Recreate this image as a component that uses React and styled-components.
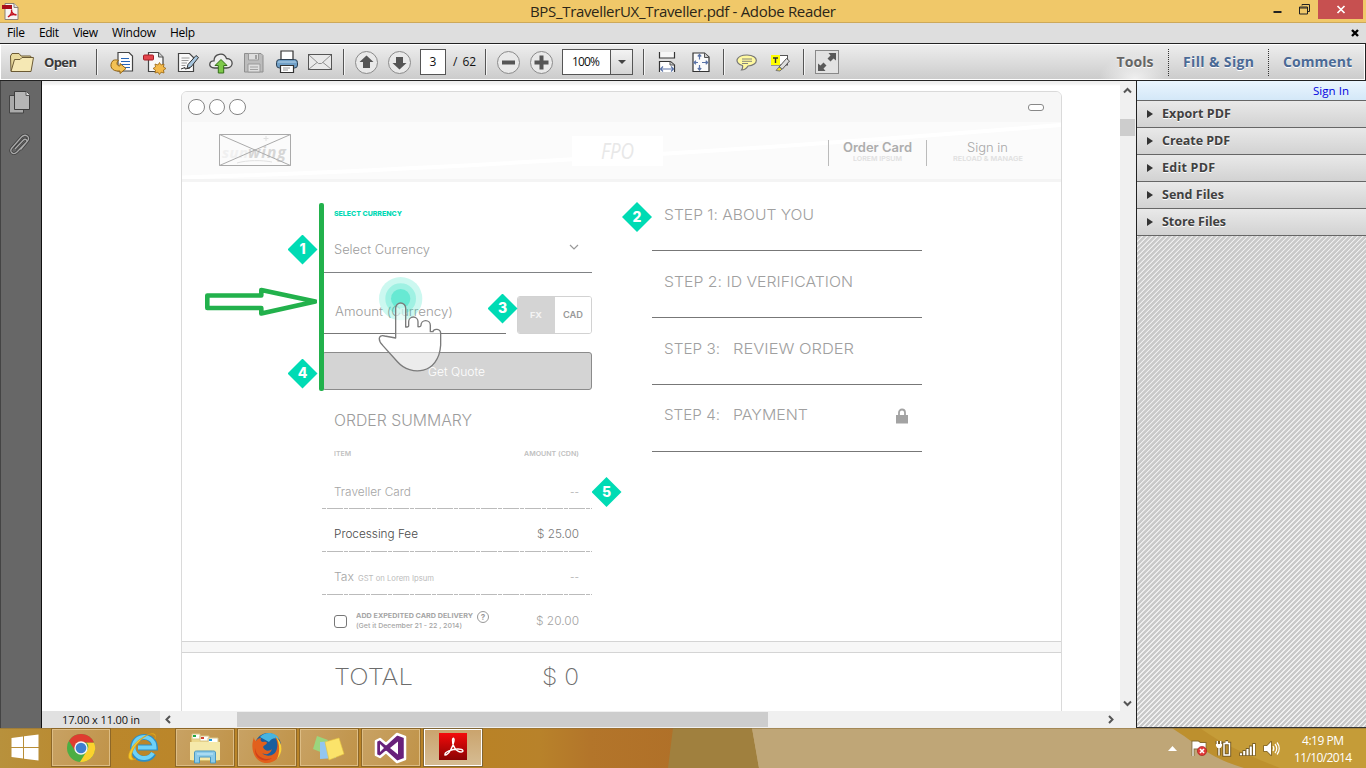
import React, { useLayoutEffect, useRef, useState } from "react";
import styled, { createGlobalStyle, css } from "styled-components";

const UI = '"Open Sans", "Noto Sans", sans-serif';
const DOC = 'Inter, "Open Sans", sans-serif';

const Global = createGlobalStyle`
  * { box-sizing: border-box; }
  html, body { margin: 0; padding: 0; overflow: hidden; }
  body { font-family: ${UI}; background: #fff; }
  svg { display: block; flex: none; }
`;

/* ---------- text ---------- */
const TextSpan = styled.span`
  display: inline-block;
  flex: none;
  white-space: pre;
  transform-origin: 0 50%;
  font-variant-ligatures: none;
  font-feature-settings: "calt" 0;
  font-family: ${(p) => (p.$doc ? DOC : UI)};
  font-size: ${(p) => p.$size}px;
  line-height: ${(p) => p.$line || 16}px;
  font-weight: ${(p) => p.$weight || 400};
  font-style: ${(p) => (p.$italic ? "italic" : "normal")};
  color: ${(p) => p.$color || "#111"};
  text-shadow: ${(p) => (p.$embossed ? "0 1px 0 #fff" : "none")};
`;

/* Makes a line exactly `width` pixels long: interface text is tracked,
   document text (and anything with `stretch`) gets wider or narrower letters. */
function Text({ width, stretch, children, ...rest }) {
  const ref = useRef(null);
  const [fit, setFit] = useState(null);
  const scaled = stretch || rest.$doc;
  useLayoutEffect(() => {
    if (!width) return;
    const natural = ref.current.getBoundingClientRect().width;
    const gaps = Math.max(1, String(children).length - 1);
    setFit(
      scaled
        ? { transform: `scaleX(${width / natural})`, marginRight: `${width - natural}px` }
        : { width, letterSpacing: `${(width - natural) / gaps}px` }
    );
  }, []);
  return (
    <TextSpan ref={ref} style={fit || undefined} {...rest}>
      {children}
    </TextSpan>
  );
}

/* ---------- window frame ---------- */
const Screen = styled.div`
  width: 1366px;
  height: 768px;
  display: flex;
  flex-direction: column;
  overflow: hidden;
`;

const TitleBar = styled.header`
  height: 23px;
  flex: none;
  display: grid;
  grid-template-columns: 1fr auto 1fr;
  background: #f0c869;
  border-bottom: 1px solid #cda95a;
`;

const TitleIcon = styled.div`
  padding: 3px 0 0 2px;
`;

const WindowButtons = styled.div`
  display: flex;
  justify-content: flex-end;
  padding-right: 3px;
`;

const WindowButton = styled.div`
  width: ${(p) => p.$w}px;
  height: 19px;
  display: flex;
  align-items: center;
  justify-content: center;
  background: ${(p) => (p.$close ? "#c75050" : "transparent")};
`;

const MenuBar = styled.nav`
  height: 20px;
  flex: none;
  display: flex;
  align-items: center;
  gap: 14px;
  padding: 0 7px;
  background: #dedede;
`;

const MenuClose = styled.div`
  margin-left: auto;
`;

const Toolbar = styled.div`
  height: 38px;
  flex: none;
  display: flex;
  align-items: center;
  border: 1px solid #222;
  border-left: 0;
  box-shadow: inset 0 0 0 1px #fff;
  background: linear-gradient(#eeeeee, #cbcbcb);
`;

const Slot = styled.div`
  width: ${(p) => p.$w || 33}px;
  flex: none;
  display: flex;
  justify-content: center;
`;

const Separator = styled.div`
  width: 1px;
  height: 26px;
  flex: none;
  margin: 0 ${(p) => p.$after}px 0 ${(p) => p.$before}px;
  background: #555;
  box-shadow: 1px 0 0 #f4f4f4;
`;

const Gap = styled.div`
  width: ${(p) => p.$w}px;
  flex: none;
`;

const PageInput = styled.div`
  width: 26px;
  height: 26px;
  margin: 0 7px 0 4px;
  flex: none;
  display: flex;
  align-items: center;
  justify-content: center;
  background: #fff;
  border: 1px solid #555;
`;

const ZoomSelect = styled.div`
  width: 71px;
  height: 26px;
  margin-left: 4px;
  flex: none;
  display: flex;
  align-items: center;
  background: #fff;
  border: 1px solid #555;
`;

const ZoomValue = styled.div`
  width: 46px;
  display: flex;
  justify-content: center;
`;

const ZoomArrow = styled.div`
  width: 22px;
  height: 24px;
  margin-left: auto;
  display: flex;
  align-items: center;
  justify-content: center;
  border-left: 1px solid #555;
  background: linear-gradient(#f3f3f3, #d5d5d5);
`;

const PanelTabs = styled.div`
  height: 34px;
  margin-left: auto;
  padding-right: 13px;
  display: flex;
  align-items: center;
`;

const TabGlow = styled.div`
  width: 80px;
  height: 34px;
  display: flex;
  align-items: center;
  justify-content: center;
  background: radial-gradient(ellipse 36px 25px at 50% 100%, #f0f0f0, transparent);
`;

const DottedRule = styled.div`
  height: 27px;
  border-left: 1px dotted #333;
  margin: 0 14px 0 ${(p) => (p.$tight ? -7 : 14)}px;
`;

/* ---------- workspace ---------- */
const Workspace = styled.div`
  height: 647px;
  flex: none;
  display: flex;
`;

const Rail = styled.aside`
  width: 42px;
  flex: none;
  display: flex;
  flex-direction: column;
  align-items: center;
  gap: 18px;
  padding: 9px 4px 0 0;
  background: #676767;
  border-left: 1px solid #444;
  border-right: 1px solid #111;
`;

const Viewer = styled.div`
  width: 1094px;
  flex: none;
  display: flex;
  flex-direction: column;
`;

const ViewerTop = styled.div`
  height: 630px;
  display: flex;
`;

const Canvas = styled.div`
  width: 1078px;
  height: 630px;
  position: relative;
  overflow: hidden;
  background: linear-gradient(#ececec, #f2f2f2 3px, #fff 5px);
  padding: 10px 0 0 139px;
`;

const VScroll = styled.div`
  width: 16px;
  padding-right: 1px;
  display: flex;
  flex-direction: column;
  align-items: center;
  background: #f0f0f0;
`;

const VThumb = styled.div`
  width: 15px;
  height: 17px;
  margin-top: 25px;
  background: #cdcdcd;
`;

const VArrow = styled.div`
  margin-top: ${(p) => p.$top};
  padding-bottom: ${(p) => p.$bottom || 0}px;
`;

const BottomBar = styled.div`
  height: 17px;
  display: flex;
  align-items: center;
  background: #f0f0f0;
`;

const PageSize = styled.div`
  width: 118px;
  height: 17px;
  padding-left: 20px;
  display: flex;
  align-items: center;
  background: #e1e1e1;
`;

const HThumb = styled.div`
  width: 531px;
  height: 15px;
  margin: 0 340px 0 66px;
  background: #cdcdcd;
`;

const SidePanel = styled.aside`
  width: 230px;
  flex: none;
  display: flex;
  flex-direction: column;
  border-left: 1px solid #222;
  border-bottom: 1px solid #333;
  background: repeating-linear-gradient(135deg, #f0f0f0 0 0.9px, #c9c9c9 1.2px 3.2px, #f0f0f0 3.54px);
`;

const SignIn = styled.div`
  height: 19px;
  padding-right: 17px;
  display: flex;
  justify-content: flex-end;
  align-items: center;
  background: linear-gradient(#eaf5fe, #d4e8f8);
`;

const PanelRow = styled.div`
  height: 27px;
  padding-left: 10px;
  display: flex;
  align-items: center;
  gap: 9px;
  border-top: 1px solid #666;
  background: linear-gradient(#e9e9e9, #d2d2d2);
  ${(p) => p.$last && css`height: 28px; border-bottom: 1px solid #666;`}
`;

/* ---------- document ---------- */
const Page = styled.div`
  width: 881px;
  height: 640px;
  display: flex;
  flex-direction: column;
  border: 1px solid #dadada;
  border-radius: 6px 6px 0 0;
  overflow: hidden;
  background: #fff;
`;

const Chrome = styled.div`
  height: 30px;
  flex: none;
  padding: 0 17px 0 6px;
  display: flex;
  align-items: center;
  gap: 4px;
  background: #f7f7f7;
`;

const Dot = styled.div`
  width: 16.5px;
  height: 16.5px;
  border: 1px solid #858585;
  border-radius: 50%;
  background: #fff;
`;

const Pill = styled.div`
  width: 16px;
  height: 7px;
  margin-left: auto;
  border: 1px solid #888;
  border-radius: 3px;
  background: #fff;
`;

const SiteHeader = styled.div`
  height: 60px;
  flex: none;
  position: relative;
  display: flex;
  align-items: flex-start;
  padding: 12px 0 0 37px;
  background: #fbfbfb;
  border-bottom: 3px solid #f4f4f4;
`;

const Sweep = styled.svg`
  position: absolute;
  left: 0;
  top: 0;
`;

const Logo = styled.div`
  width: 72px;
  height: 32px;
  position: relative;
  display: flex;
  align-items: center;
  padding: 3px 0 0 3px;
`;

const Cross = styled.svg`
  position: absolute;
  left: 0;
  top: 0;
`;

const Placeholder = styled.div`
  width: 91px;
  height: 30px;
  margin: 2px 165px 0 281px;
  position: relative;
  display: flex;
  align-items: center;
  justify-content: center;
  background: #fff;
`;

const SiteLink = styled.div`
  width: ${(p) => p.$w}px;
  height: 26px;
  margin-top: 6px;
  position: relative;
  display: flex;
  flex-direction: column;
  align-items: center;
  border-left: 1px solid #bbb;
`;

const Body = styled.div`
  height: 459px;
  flex: none;
  padding-left: 140px;
  display: grid;
  grid-template-columns: 270px 270px;
  gap: 60px;
`;

const Form = styled.div`
  display: flex;
  flex-direction: column;
`;

const FieldLabel = styled.div`
  height: 36px;
  padding: 27px 0 0 12px;
  line-height: 0;
`;

const Select = styled.div`
  height: 55px;
  padding: 23px 13px 0 12px;
  display: flex;
  justify-content: space-between;
  border-bottom: 1px solid #808285;
`;

const Chevron = styled.div`
  padding-top: 2px;
`;

const AmountRow = styled.div`
  height: 61px;
  display: flex;
  align-items: flex-end;
  justify-content: space-between;
`;

const AmountField = styled.div`
  width: 184px;
  height: 61px;
  padding: 31px 0 0 13px;
  display: flex;
  align-items: flex-start;
  border-bottom: 1px solid #777;
`;

const Toggle = styled.div`
  width: 75px;
  height: 38px;
  display: flex;
  border: 1px solid #d2d2d2;
  border-radius: 3px;
  overflow: hidden;
`;

const ToggleOption = styled.div`
  flex: 1;
  display: flex;
  align-items: center;
  justify-content: center;
  background: ${(p) => (p.$on ? "#d4d4d4" : "#fff")};
`;

const QuoteButton = styled.div`
  height: 38px;
  margin-top: 18px;
  padding: 1px 1px 0 0;
  display: flex;
  align-items: center;
  justify-content: center;
  border: 1px solid #8b8b8b;
  border-radius: 3px;
  background: #d4d4d4;
`;

const SummaryTitle = styled.div`
  height: 38px;
  margin-top: 20px;
  padding: 1px 0 0 12px;
  display: flex;
  align-items: flex-start;
`;

const TableHead = styled.div`
  height: 10px;
  padding: 1px 13px 0 12px;
  display: flex;
  justify-content: space-between;
`;

const TableRow = styled.div`
  height: ${(p) => p.$h}px;
  padding: ${(p) => p.$top}px 13px 0 12px;
  display: flex;
  justify-content: space-between;
  background: repeating-linear-gradient(90deg, #bbb 0 4px, #fff 4px 5px, #bbb 5px 21px, #fff 21px 22px) 0 100% / 100% 1px no-repeat;
`;

const Inline = styled.div`
  display: flex;
  gap: 4px;
`;

const DeliveryRow = styled.div`
  height: 46px;
  padding: 15px 13px 0 12px;
  display: flex;
`;

const Checkbox = styled.div`
  width: 13px;
  height: 13px;
  margin: 5px 9px 0 0;
  border: 1px solid #777;
  border-radius: 3px;
`;

const DeliveryText = styled.div`
  width: 117px;
  padding-top: 1px;
  display: flex;
  flex-direction: column;
  align-items: flex-start;
`;

const HelpMark = styled.div`
  width: 12px;
  height: 12px;
  margin: 1px 0 0 4px;
  display: flex;
  align-items: center;
  justify-content: center;
  border: 1px solid #999;
  border-radius: 50%;
`;

const DeliveryPrice = styled.div`
  height: 16px;
  margin: 3px 0 0 auto;
  display: flex;
`;

const Steps = styled.div`
  display: flex;
  flex-direction: column;
`;

const Step = styled.div`
  height: ${(p) => p.$h}px;
  padding: ${(p) => p.$top}px 14px 0 12px;
  display: flex;
  gap: 13px;
  border-bottom: 1px solid #777;
`;

const Lock = styled.div`
  margin: 3px 0 0 auto;
`;

const Band = styled.div`
  height: 12px;
  flex: none;
  background: #f7f7f7;
  border-top: 1px solid #d4d4d4;
  border-bottom: 1px solid #d4d4d4;
`;

const TotalRow = styled.div`
  width: 270px;
  margin-left: 140px;
  padding: 9px 13px 0 12px;
  display: flex;
  justify-content: space-between;
`;

/* ---------- annotations laid over the page ---------- */
const Marker = styled.div`
  position: absolute;
  left: ${(p) => p.$x - 15}px;
  top: ${(p) => p.$y - 15}px;
  width: 30px;
  height: 30px;
  display: flex;
  align-items: center;
  justify-content: center;
  padding-bottom: 1px;
  background: #00dbb4;
  clip-path: polygon(50% 0, 100% 50%, 50% 100%, 0 50%);
`;

const GreenBar = styled.div`
  position: absolute;
  left: 277px;
  top: 122px;
  width: 5px;
  height: 188px;
  border-radius: 2px;
  background: #22b14c;
`;

const Arrow = styled.svg`
  position: absolute;
  left: 161px;
  top: 205px;
`;

const Hand = styled.svg`
  position: absolute;
  left: 334.67px;
  top: 194px;
`;

/* ---------- taskbar ---------- */
const Taskbar = styled.footer`
  height: 40px;
  flex: none;
  position: relative;
  display: flex;
  align-items: flex-start;
  background: linear-gradient(90deg, #b8913c 0, #bb872b 100px, #b98226 480px, #b8822a 540px, #b3752a 590px, #b07028 680px, #c3aa78 760px, #bea577 1366px);
`;

const Wallpaper = styled.svg`
  position: absolute;
  left: 0;
  top: 0;
`;

const StartButton = styled.div`
  width: 51px;
  height: 40px;
  padding: 6px 0 0 11px;
  position: relative;
`;

const AppButton = styled.div`
  width: 60px;
  height: 39px;
  margin-right: 2px;
  position: relative;
  display: flex;
  align-items: center;
  justify-content: center;
  ${(p) =>
    !p.$plain &&
    css`
      border: 1px solid ${p.$active ? "#806535" : "#8d6728"};
      box-shadow: inset 0 0 0 1px ${p.$active ? "#fff" : "#ddbd85"};
      background: ${p.$active ? "linear-gradient(#caa36c, #d6bd94)" : "linear-gradient(110deg, #c8a264, #c09348)"};
    `}
`;

const Tray = styled.div`
  margin-left: auto;
  height: 40px;
  position: relative;
  display: flex;
  align-items: center;
`;

const TrayIcons = styled.div`
  display: flex;
  align-items: center;
  gap: 7px;
  padding: 1px 14px 0 0;
`;

const Clock = styled.div`
  width: 58px;
  margin: 1px 14px 0 0;
  display: flex;
  flex-direction: column;
  align-items: center;
`;

/* ---------- toolbar icons ---------- */
const PdfFile = () => (
  <svg width="17" height="17" viewBox="0 0 17 17">
    <path d="M3 .5h9l4 4v12H3z" fill="#f7f5f3" stroke="#8b8174" />
    <path d="M12 .5v4h4" fill="#ddd" stroke="#8b8174" />
    <path d="M0 2h10v4H0z" fill="#a90f1c" />
    <path d="M6 14c3-2 4-5 3.500-7.500M9.500 7c0 3 2 4.500 5 4.700M6 14c2-2 5-3 8.500-2" fill="none" stroke="#c41522" strokeWidth="1.400" />
  </svg>
);
const Folder = () => (
  <svg width="26" height="22" viewBox="0 0 26 22">
    <path d="M2 20 1.500 5 3 2.500h7l2 2.500h9.500l1 2" fill="#e8d99c" stroke="#6b5a34" />
    <path d="M2 20.500 5.500 8.500 11 8.500 13 6.500h11.500L22 20.500z" fill="#f5e8b4" stroke="#6b5a34" strokeLinejoin="round" />
  </svg>
);
const ConvertIcon = () => (
  <svg width="26" height="25" viewBox="0 0 26 25">
    <path d="M9 2.500h11l3.500 3.500V21H9z" fill="#fcfcfc" stroke="#444" strokeWidth="1.200" />
    <path d="M12 8.500h8M12 11.500h9M12 14.500h9M15 17.500h6" stroke="#2766b8" strokeWidth="1.200" />
    <path d="M4 10.500c1.500-.8 4-.8 5.500 0-2 1-2.500 5.500 1.500 5.500v-2.500l6 5-6 5v-2.500c-8.500 1-11.500-5.500-7-10.500z" fill="#f4c255" stroke="#946412" />
  </svg>
);
const CreateIcon = () => (
  <svg width="26" height="25" viewBox="0 0 26 25">
    <path d="M6.500 2.500h10l4.500 4.500V21.500H6.500z" fill="#f8f8f8" stroke="#444" strokeWidth="1.200" />
    <path d="M16.500 2.500V7H21" fill="#ccc" stroke="#555" />
    <rect x="1.500" y="5" width="10" height="5" rx="1" fill="#e3444b" stroke="#a31c25" />
    <path d="m17.500 12.500 1.500 2.500 3-1-.5 3 2.500 1.500-2.500 1.500.5 3-3-.8-1.500 2.300-1.500-2.300-3 .8.500-3-2.500-1.500 2.500-1.500-.5-3 3 1z" fill="#f3b94a" stroke="#9b6815" strokeWidth=".8" />
  </svg>
);
const EditIcon = () => (
  <svg width="26" height="25" viewBox="0 0 26 25">
    <path d="M3.500 3.500h11l4 4V21.500h-15z" fill="#f9f9f9" stroke="#444" strokeWidth="1.200" />
    <path d="M6.500 8h8M6.500 10.500h7M6.500 13h5.500M6.500 15.500h4" stroke="#999" />
    <path d="m13 14.500 8-9 2.500 2-7.500 9.500-4 1.500z" fill="#a8c7e0" stroke="#333" />
    <path d="m6 19 4-1.500v1.500l5-1" fill="none" stroke="#333" />
  </svg>
);
const CloudIcon = () => (
  <svg width="26" height="25" viewBox="0 0 26 25">
    <path d="M6.500 18C-.5 18 1 10.500 6 10.800 6 3.500 16 1.500 18.500 8.500c7.500 0 7.500 9.500 0 9.500z" fill="#eee" stroke="#4c4c4c" strokeWidth="1.300" />
    <path d="m13 9.500 6 6h-3.300v7.500h-5.400v-7.500H7z" fill="#7ec94a" stroke="#346e18" />
  </svg>
);
const SaveIcon = () => (
  <svg width="26" height="25" viewBox="0 0 26 25">
    <path d="M3.500 3.500h16.500l2 2v16.500H3.500z" fill="#bcbcbc" stroke="#8e8e8e" />
    <path d="M7.500 3.500h10v6.500h-10zM7 14h12v8H7z" fill="#dedede" stroke="#999" />
    <path d="M14 5h2v4h-2zM9 16.500h8v1H9zm0 2.500h8v1H9z" fill="#a0a0a0" />
  </svg>
);
const PrintIcon = () => (
  <svg width="26" height="26" viewBox="0 0 26 26">
    <path d="M7 2h12v10H7z" fill="#fff" stroke="#333" strokeWidth="1.200" />
    <rect x="2.500" y="10.500" width="21" height="8.500" rx="3" fill="#6f9fc7" stroke="#2f4254" />
    <path d="M4 13h18" stroke="#b8d5eb" />
    <path d="M6.500 16.500h13v7h-13z" fill="#fff" stroke="#333" strokeWidth="1.200" />
    <path d="M9 19h7M9 21h5" stroke="#999" />
  </svg>
);
const MailIcon = () => (
  <svg width="26" height="20" viewBox="0 0 26 20">
    <rect x="1.500" y="2.500" width="23" height="15" fill="#e9e9e9" stroke="#555" />
    <path d="m2 3 9.500 8.500h3L24 3M2 17l8-6.500M24 17l-8-6.500" fill="none" stroke="#909090" />
  </svg>
);
const RoundButton = ({ d }) => (
  <svg width="25" height="25" viewBox="0 0 25 25">
    <circle cx="12.500" cy="12.500" r="11" fill="#e9e9e9" stroke="#8a8a8a" />
    <path d={d} fill="#555" />
  </svg>
);
const FitWidthIcon = () => (
  <svg width="20" height="22" viewBox="0 0 20 22">
    <path d="M2.500 1v6h15V1" fill="#f6f6f6" stroke="#333" strokeWidth="1.200" />
    <path d="M2.500 21V10.500h11l4 3.500v7" fill="#fff" stroke="#333" strokeWidth="1.200" />
    <path d="M13 10.500V14h4" fill="#ccc" stroke="#555" />
    <path d="M3.500 18h13M6 15.500 3.500 18 6 20.500M14 15.500l2.500 2.500-2.500 2.500" fill="none" stroke="#5a73a8" strokeWidth="1.200" />
  </svg>
);
const FitPageIcon = () => (
  <svg width="20" height="22" viewBox="0 0 20 22">
    <path d="M2 2h11.500L18 6v14.500H2z" fill="#fbfbfb" stroke="#333" strokeWidth="1.200" />
    <path d="M13.500 2v4.500H18" fill="#ccc" stroke="#555" />
    <path d="M8.500 3.500v5M8.500 14v5M3 11.500h4M11 11.500h5.500M6.800 5.500l1.700-2 1.700 2M6.800 17l1.700 2 1.700-2M5 9.700l-2 1.800 2 1.800M14.700 9.700l2 1.800-2 1.800" fill="none" stroke="#5a73a8" strokeWidth="1.200" />
  </svg>
);
const CommentIcon = () => (
  <svg width="22" height="20" viewBox="0 0 22 20">
    <path d="M11 3c12.500 0 12 10.500 1 11-1.500 2.500-4 4-6.500 4 1-1.500 1.500-3 1-4.500C-2.500 11 0 3 11 3z" fill="#fff9a0" stroke="#777" strokeWidth="1.200" />
    <path d="M6 7h10M6 9.300h10M6 11.500h6" stroke="#777" strokeWidth=".9" />
  </svg>
);
const MarkIcon = () => (
  <svg width="22" height="20" viewBox="0 0 22 20">
    <rect x="2.500" y="3.500" width="16" height="9.500" fill="#fff" stroke="#555" />
    <path d="M2 3h9v10H2z" fill="#ff0" />
    <path d="M4 6h5M6.500 6v5" stroke="#333" strokeWidth="1.400" />
    <path d="m10 15 7.500-8.500L20.500 9l-7 8z" fill="#ddd" stroke="#555" />
    <path d="m7 18.500 3-3.500 3 2-2 2z" fill="#f6e31a" stroke="#777" />
  </svg>
);
const FullScreenIcon = () => (
  <svg width="24" height="24" viewBox="0 0 24 24">
    <rect x=".5" y=".5" width="23" height="23" fill="#e2e2e2" stroke="#888" />
    <path d="M13.500 3H21v7.500l-2.500-2-3 3-3-3 3-3zM3 13.500l2.500 2 3-3 3 3-3 3 2 2.500H3z" fill="#5a5a5a" />
  </svg>
);
const PagesIcon = () => (
  <svg width="23" height="25" viewBox="0 0 23 25">
    <path d="M1.500 5.500h14v17.500h-14z" fill="#aaa" stroke="#444" />
    <path d="M6.500 1.500h12l3 3v15h-15z" fill="#b5b5b5" stroke="#3d3d3d" />
    <path d="M18 1.500v4h4" fill="#ddd" stroke="#555" />
  </svg>
);
const ClipIcon = () => (
  <svg width="24" height="24" viewBox="0 0 24 24" fill="none">
    <path d="m8 16 8.500-9c2-2 4.500.5 3 2.300L10 19c-3.500 3.500-8 0-5.500-3.500l10-11.500c4-4 9 0 6 4.200l-7 8.300" stroke="#3f3f3f" strokeWidth="3" />
    <path d="m8 16 8.500-9c2-2 4.500.5 3 2.300L10 19c-3.500 3.500-8 0-5.500-3.500l10-11.500c4-4 9 0 6 4.200l-7 8.300" stroke="#aaa" strokeWidth="1.300" />
  </svg>
);
const Caret = ({ d, w, h, stroke = "#555", sw = 2 }) => (
  <svg width={w} height={h} viewBox={`0 0 ${w} ${h}`} fill="none">
    <path d={d} stroke={stroke} strokeWidth={sw} />
  </svg>
);

/* ---------- taskbar icons ---------- */
const WindowsLogo = () => (
  <svg width="28" height="27" viewBox="0 0 28 27" fill="#fff">
    <path d="M.5 4 12 2.500V13H.5zM13 2.300 27.500.5V13H13zM.5 14H12v10.500L.5 23zM13 14h14.500v12.500L13 24.700z" />
  </svg>
);
const ChromeLogo = () => (
  <svg width="30" height="30" viewBox="0 0 30 30">
    <circle cx="15" cy="15" r="14" fill="#4cae43" />
    <path d="M28 9.500A14 14 0 0 1 14 29l6.500-10.500a6.500 6.500 0 0 0 0-9z" fill="#fbd22d" />
    <path d="M3 8 9.500 18.500A6.500 6.500 0 0 1 15 9.500h13A14 14 0 0 0 3 8z" fill="#df3c30" />
    <circle cx="15" cy="15" r="6.700" fill="#f5f5f5" />
    <circle cx="15" cy="15" r="5.300" fill="#3f7fcf" />
  </svg>
);
const ExplorerLogo = () => (
  <svg width="32" height="32" viewBox="0 0 32 32" fill="none">
    <path d="M26.500 21.500A11 11 0 1 1 28 15.500H11" stroke="#2c8fc7" strokeWidth="5.800" />
    <path d="M26 21A10.500 10.500 0 1 1 27.500 15.500H11" stroke="#6ed2f7" strokeWidth="4" />
    <path d="M5 28C-3 28 4 12 15 6 22 1 30 0 28 7c3-10-9-5-16 3C4 18 2 28 9 27z" fill="#f6ca29" stroke="#d69a17" strokeWidth=".6" />
  </svg>
);
const FilesLogo = () => (
  <svg width="33" height="32" viewBox="0 0 33 32">
    <path d="M2 4h9l1 3h7l1 2h10v20H2z" fill="#ecd88b" stroke="#c3a04a" />
    <path d="M3 2h8v5H3zM11 4h9v5h-9zM19 6h10v5H19z" fill="#fff" stroke="#d9c68a" />
    <path d="M4 3h3v2H4z" fill="#1ca642" />
    <path d="M12 5h3v2h-3z" fill="#d3442f" />
    <path d="M20 7h3v2h-3z" fill="#1b9be0" />
    <path d="M1 10h30v18H1z" fill="#f5e9aa" />
    <path d="M5.500 31V21c0-2 1-2 2-2h16c2 0 3 0 3 2v10h-5v-6h-11v6z" fill="#8ccbe9" stroke="#4d98bf" />
    <path d="M8 22h16" stroke="#c7eafa" />
  </svg>
);
const FirefoxLogo = () => (
  <svg width="32" height="32" viewBox="0 0 32 32">
    <circle cx="17" cy="14" r="13" fill="#1b5e9d" />
    <path d="M9 5C14-1 25 0 28 7c-5-2-8 0-10 3z" fill="#46b4e0" />
    <path d="M3 5c0 3 1 3 2 4 2-3 4-3 5-3-1 2 0 4 2 4 2-.5 4 0 4 1-1 2-3 2-4 4 2 5 7 4 9 2-2 6-7 6-10 4 5 5 14 3 15-5 1-4 0-8-2-11 4 2 7 8 6 13-1 8-7 13-14 13C5 31-2 19 3 5z" fill="#e2601c" />
    <path d="M25 5c6 5 8 15 1 22 3-7 3-15-1-22z" fill="#f8d33b" />
    <path d="M4 16c1 8 8 13 17 10-5 5-18 3-17-10z" fill="#d13f1a" />
  </svg>
);
const NotesLogo = () => (
  <svg width="34" height="28" viewBox="0 0 34 28">
    <path d="m5 2 11 4-5 13-10-4z" fill="#9bd57d" />
    <path d="m8 8 15-1 1 17-16 1z" fill="#93c6ef" />
    <path d="m13 8 14-4 5 16-15 6z" fill="#fbe36a" stroke="#e5c33e" strokeWidth=".6" />
  </svg>
);
const StudioLogo = () => (
  <svg width="34" height="32" viewBox="0 0 34 32">
    <path d="M2 9 6 7l6 5L23 2l8 3v22l-8 3-11-10-6 5-4-2z" fill="#68217a" stroke="#fff" strokeWidth="2.500" strokeLinejoin="round" />
    <path d="m6 12 4 4-4 4zM16 16l8-6.500v13z" fill="#fff" />
  </svg>
);
const AcrobatLogo = () => (
  <svg width="28" height="29" viewBox="0 0 28 29">
    <defs>
      <linearGradient id="acro" x1="0" y1="0" x2="0" y2="1">
        <stop offset="0" stopColor="#f40b0b" />
        <stop offset="1" stopColor="#8a0303" />
      </linearGradient>
    </defs>
    <path d="M0 0h28v27H0z" fill="url(#acro)" />
    <path d="M6 22c-1-3 7-6 13-6 6 0 6 3 3 3-5 0-9-7-8.500-12 .5-3 2-2 1.500 1-.8 5-5 14-9 14z" fill="none" stroke="#fff" strokeWidth="1.400" />
  </svg>
);
const FlagIcon = () => (
  <svg width="17" height="17" viewBox="0 0 17 17">
    <path d="M2 16V1.500M2 2h5l2 1.500h5V9H9L7 8H2z" fill="#fff" stroke="#6d5a30" strokeWidth="3" opacity=".7" />
    <path d="M2 16V1.500M2 2h5l2 1.500h5V9H9L7 8H2z" fill="#fff" stroke="#fff" strokeWidth="1.200" />
    <circle cx="11" cy="11" r="4.600" fill="#e13838" stroke="#a01818" strokeWidth=".6" />
    <path d="m9 9 4 4m0-4-4 4" stroke="#fff" strokeWidth="1.600" />
  </svg>
);
const BatteryIcon = () => (
  <svg width="17" height="17" viewBox="0 0 17 17" fill="none">
    <path d="M9 3.500h5.500v11.500H9zM10.500 1.800h2.500M4 5v10.500M2.300 1v3M5.700 1v3" stroke="#5d4a22" strokeWidth="3.400" opacity=".75" />
    <path d="M9 3.500h5.500v11.500H9zM10.500 2h2.500M4 6v9.500M2.300 1v3M5.700 1v3" stroke="#fff" strokeWidth="1.400" />
    <path d="M1 4h6v2L5.500 8h-3L1 6z" fill="#fff" />
  </svg>
);
const SignalIcon = () => (
  <svg width="17" height="14" viewBox="0 0 17 14">
    <path d="M2 14v-3.500M5.200 14V8M8.500 14V6M11.800 14V3.500M15 14V1" stroke="#5d4a22" strokeWidth="3.400" opacity=".75" />
    <path d="M2 13.200v-2M5.200 13.200V9M8.500 13.200V7M11.800 13.200V4.500M15 13.200V2" stroke="#fff" strokeWidth="2" />
  </svg>
);
const SpeakerIcon = () => (
  <svg width="17" height="15" viewBox="0 0 17 15" fill="none">
    <path d="M1 5h3l4-4v13l-4-4H1z" stroke="#5d4a22" strokeWidth="1.600" opacity=".7" />
    <path d="M1 5h3l4-4v13l-4-4H1z" fill="#fff" />
    <path d="M10 5c1 1.500 1 3.500 0 5M12 3c2.300 2.500 2.300 6.500 0 9M14 1.500c3 3.500 3 8.500 0 12" stroke="#fff" strokeWidth="1.200" />
  </svg>
);

/* ---------- data ---------- */
const menus = [["File", 18], ["Edit", 20], ["View", 25], ["Window", 44], ["Help", 25]];
const fileTools = [ConvertIcon, CreateIcon, EditIcon, CloudIcon, SaveIcon, PrintIcon, MailIcon];
const panels = [["Export PDF", 69], ["Create PDF", 68], ["Edit PDF", 53], ["Send Files", 62], ["Store Files", 64]];
const rows = [
  { label: "Traveller Card", w: 77, color: "#a5a5a5", value: "--", vw: 9, vcolor: "#aaa", h: 51, top: 26 },
  { label: "Processing Fee", w: 84, color: "#4a4a4a", value: "$ 25.00", vw: 42, vcolor: "#777", h: 43, top: 17 },
  { label: "Tax", w: 20, color: "#a5a5a5", note: "GST on Lorem Ipsum", value: "--", vw: 9, vcolor: "#aaa", h: 43, top: 17 },
];
const steps = [
  { parts: [["STEP 1: ABOUT YOU", 150]], h: 69, top: 23 },
  { parts: [["STEP 2: ID VERIFICATION", 189]], h: 67, top: 21 },
  { parts: [["STEP 3:", 56], ["REVIEW ORDER", 121]], h: 67, top: 21 },
  { parts: [["STEP 4:", 56], ["PAYMENT", 75]], h: 67, top: 20, locked: true },
];
const markers = [[1, 260.5, 168.5], [2, 595, 136], [3, 460.5, 227.5], [4, 260.5, 292.5], [5, 564.5, 411]];
const apps = [
  { Icon: ChromeLogo }, { Icon: ExplorerLogo, plain: true }, { Icon: FilesLogo }, { Icon: FirefoxLogo },
  { Icon: NotesLogo }, { Icon: StudioLogo }, { Icon: AcrobatLogo, active: true },
];

const PanelTab = ({ children, width, color = "#4b6a96" }) => (
  <Text $size={14} $weight={700} $line={20} $color={color} $embossed width={width}>{children}</Text>
);

function DocumentPage() {
  return (
    <Page>
      <Chrome>
        <Dot /><Dot /><Dot /><Pill />
      </Chrome>
      <SiteHeader>
        <Sweep width="880" height="57" viewBox="0 0 880 57">
          <path d="M0 55.500C250 48 600 26 880 3" fill="none" stroke="#fff" strokeWidth="4" />
        </Sweep>
        <Logo>
          <Text $size={15} $weight={700} $italic $line={20} $color="#f0f0f0" width={26}>sun</Text>
          <Text $size={15.5} $weight={700} $italic $line={20} $color="#d6d6d6" width={38}>wing</Text>
          <Cross width="72" height="32" viewBox="0 0 72 32" fill="none">
            <path d="M18 29c10-3 25-3 35-1M47 2v5M44.500 4.500h5" stroke="#e0e0e0" />
            <path d="M.5.5h71v31H.5zM.5.500l71 31M71.500.500l-71 31" stroke="#aaa" />
          </Cross>
        </Logo>
        <Placeholder>
          <Text stretch $size={21} $italic $line={28} $color="#e8e8e8" width={33}>FPO</Text>
        </Placeholder>
        <SiteLink $w={98}>
          <Text $doc $size={12.5} $weight={600} $line={15} $color="#adadad" width={69}>Order Card</Text>
          <Text $doc $size={6.5} $weight={600} $line={9} $color="#e0e0e0" width={49}>LOREM IPSUM</Text>
        </SiteLink>
        <SiteLink $w={122}>
          <Text $doc $size={12.5} $weight={300} $line={15} $color="#a8a8a8" width={41}>Sign in</Text>
          <Text $doc $size={6.5} $weight={600} $line={9} $color="#e0e0e0" width={70}>{"RELOAD & MANAGE"}</Text>
        </SiteLink>
      </SiteHeader>
      <Body>
        <Form>
          <FieldLabel>
            <Text $doc $size={6.8} $weight={800} $line={10} $color="#00d9b4" width={68}>SELECT CURRENCY</Text>
          </FieldLabel>
          <Select>
            <Text $doc $size={12.5} $weight={300} $line={18} $color="#9c9c9c" width={96}>Select Currency</Text>
            <Chevron><Caret w={10} h={8} d="m1 2 4 4 4-4" stroke="#999" sw={1.2} /></Chevron>
          </Select>
          <AmountRow>
            <AmountField>
              <Text $doc $size={12.5} $weight={300} $color="#9c9c9c" width={118}>Amount (Currency)</Text>
            </AmountField>
            <Toggle>
              <ToggleOption $on><Text $doc $size={8} $weight={700} $color="#f3f3f3" width={12}>FX</Text></ToggleOption>
              <ToggleOption><Text $doc $size={8.5} $weight={600} $color="#999" width={20}>CAD</Text></ToggleOption>
            </Toggle>
          </AmountRow>
          <QuoteButton>
            <Text $doc $size={11.5} $weight={300} $color="#fff" width={57}>Get Quote</Text>
          </QuoteButton>
          <SummaryTitle>
            <Text $doc $size={15.2} $weight={300} $line={20} $color="#9c9c9c" width={138}>ORDER SUMMARY</Text>
          </SummaryTitle>
          <TableHead>
            <Text $doc $size={6.5} $weight={600} $line={10} $color="#c0c0c0" width={17}>ITEM</Text>
            <Text $doc $size={6.5} $weight={600} $line={10} $color="#c0c0c0" width={55}>AMOUNT (CDN)</Text>
          </TableHead>
          {rows.map((r) => (
            <TableRow key={r.label} $h={r.h} $top={r.top}>
              <Inline>
                <Text $doc $size={11} $weight={300} $color={r.color} width={r.w}>{r.label}</Text>
                {r.note && <Text $doc $size={7.5} $weight={400} $line={19} $color="#bbb" width={76}>{r.note}</Text>}
              </Inline>
              <Text $doc $size={11} $weight={300} $color={r.vcolor} width={r.vw}>{r.value}</Text>
            </TableRow>
          ))}
          <DeliveryRow>
            <Checkbox />
            <DeliveryText>
              <Text $doc $size={6.8} $weight={700} $line={10} $color="#a5a5a5" width={117}>ADD EXPEDITED CARD DELIVERY</Text>
              <Text $doc $size={6.8} $weight={500} $line={10} $color="#a5a5a5" width={106}>(Get it December 21 - 22 , 2014)</Text>
            </DeliveryText>
            <HelpMark><Text $doc $size={8} $weight={700} $line={10} $color="#999">?</Text></HelpMark>
            <DeliveryPrice><Text $doc $size={11} $weight={300} $color="#a2a2a2" width={43}>$ 20.00</Text></DeliveryPrice>
          </DeliveryRow>
        </Form>
        <Steps>
          {steps.map((s) => (
            <Step key={s.parts[0][0]} $h={s.h} $top={s.top}>
              {s.parts.map(([t, w]) => (
                <Text key={t} $doc $size={15} $weight={300} $line={20} $color="#a0a0a0" width={w}>{t}</Text>
              ))}
              {s.locked && (
                <Lock>
                  <svg width="12" height="16" viewBox="0 0 12 16">
                    <path d="M3 8V4.500a3 3 0 0 1 6 0V8" fill="none" stroke="#a3a3a3" strokeWidth="1.800" />
                    <path d="M0 7h12v8.500H0z" fill="#a3a3a3" />
                  </svg>
                </Lock>
              )}
            </Step>
          ))}
        </Steps>
      </Body>
      <Band />
      <TotalRow>
        <Text $doc $size={22.5} $weight={200} $line={29} $color="#6c6c6c" width={79}>TOTAL</Text>
        <Text $doc $size={22.5} $weight={200} $line={29} $color="#6c6c6c" width={37}>$ 0</Text>
      </TotalRow>
    </Page>
  );
}

export default function App() {
  return (
    <Screen>
      <Global />
      <TitleBar>
        <TitleIcon><PdfFile /></TitleIcon>
        <Text $size={15} $line={23} $color="#2b2618" width={306}>BPS_TravellerUX_Traveller.pdf - Adobe Reader</Text>
        <WindowButtons>
          <WindowButton $w={26}>
            <svg width="9" height="10" viewBox="0 0 9 10"><path d="M.5 6h8v2h-8z" fill="#222" /></svg>
          </WindowButton>
          <WindowButton $w={28}>
            <svg width="11" height="11" viewBox="0 0 11 11"><path d="M3 1.500V.500h7.500v7H9M.5 3h8v7h-8zM.5 4h8" fill="none" stroke="#222" /></svg>
          </WindowButton>
          <WindowButton $w={45} $close>
            <Caret w={10} h={9} d="m1.500 1 7 7m0-7-7 7" stroke="#fff" sw={1.7} />
          </WindowButton>
        </WindowButtons>
      </TitleBar>
      <MenuBar>
        {menus.map(([m, w]) => <Text key={m} $size={12} $color="#000" width={w}>{m}</Text>)}
        <MenuClose><Caret w={8} h={8} d="m1 1 6 6m0-6-6 6" stroke="#000" sw={2.4} /></MenuClose>
      </MenuBar>
      <Toolbar>
        <Slot $w={44}><Folder /></Slot>
        <Text $size={13} $weight={700} $color="#3a3a3a" $embossed width={33}>Open</Text>
        <Separator $before={19} $after={8} />
        {fileTools.map((Icon, i) => <Slot key={i}><Icon /></Slot>)}
        <Separator $before={7} $after={6} />
        <Slot><RoundButton d="m12.500 5.500 7 6.500h-3.500v6h-7v-6H5.500z" /></Slot>
        <Slot><RoundButton d="m12.500 19.500 7-6.500h-3.500V7h-7v6H5.500z" /></Slot>
        <PageInput><Text $size={12}>3</Text></PageInput>
        <Text $size={12} width={23}>/  62</Text>
        <Separator $before={9} $after={6} />
        <Slot><RoundButton d="M6 10.500h13v4H6z" /></Slot>
        <Slot><RoundButton d="M10.500 5.500h4v5h5v4h-5v5h-4v-5h-5v-4h5z" /></Slot>
        <ZoomSelect>
          <ZoomValue><Text $size={12} width={28}>100%</Text></ZoomValue>
          <ZoomArrow><svg width="8" height="4" viewBox="0 0 8 4"><path d="M0 0h8L4 4z" fill="#444" /></svg></ZoomArrow>
        </ZoomSelect>
        <Separator $before={10} $after={6} />
        <Slot $w={34}><FitWidthIcon /></Slot>
        <Slot $w={34}><FitPageIcon /></Slot>
        <Separator $before={5} $after={6} />
        <Slot><CommentIcon /></Slot>
        <Slot><MarkIcon /></Slot>
        <Separator $before={7} $after={11} />
        <FullScreenIcon />
        <PanelTabs>
          <TabGlow><PanelTab width={37} color="#666">Tools</PanelTab></TabGlow>
          <DottedRule $tight />
          <PanelTab width={71}>{"Fill & Sign"}</PanelTab>
          <DottedRule />
          <PanelTab width={69}>Comment</PanelTab>
        </PanelTabs>
      </Toolbar>
      <Workspace>
        <Rail><PagesIcon /><ClipIcon /></Rail>
        <Viewer>
          <ViewerTop>
            <Canvas>
              <DocumentPage />
              <GreenBar />
              <Arrow width="114" height="30" viewBox="0 0 114 30">
                <path d="M4.300 9.500h54V4l54 11.500-54 12v-5.500h-54z" fill="none" stroke="#22b14c" strokeWidth="4.600" strokeLinejoin="round" />
              </Arrow>
              {markers.map(([n, x, y]) => (
                <Marker key={n} $x={x} $y={y}>
                  <Text $doc $size={14} $weight={800} $color="#fff">{n}</Text>
                </Marker>
              ))}
              <Hand width="66.67" height="96.67" viewBox="590 255 200 290">
                <circle cx="661" cy="326" r="65" fill="#00dbb4" opacity=".2" />
                <circle cx="661" cy="326" r="46" fill="#00dbb4" opacity=".22" />
                <circle cx="661" cy="326" r="29" fill="#00dbb4" opacity=".35" />
                <path
                  d="M646 444V354a15 15 0 0 1 30 0v57q9 0 9-4v-12a14 14 0 0 1 28 0v15q9 1 9-4a14 14 0 0 1 28 0v19h8c2-10 23-10 23 5v36c-6 88-90 94-129 50l-45-50c-13-12-16-34 6-28z"
                  fill="#fff" fillOpacity=".55" stroke="#7b7b7b" strokeWidth="4" strokeLinejoin="round"
                />
              </Hand>
            </Canvas>
            <VScroll>
              <VArrow $top="6px"><Caret w={9} h={7} d="M1 5.500 4.500 2 8 5.500" /></VArrow>
              <VThumb />
              <VArrow $top="auto" $bottom={4}><Caret w={9} h={7} d="M1 1.500 4.500 5 8 1.500" /></VArrow>
            </VScroll>
          </ViewerTop>
          <BottomBar>
            <PageSize><Text $size={11} $line={14} width={78}>17.00 x 11.00 in</Text></PageSize>
            <Gap $w={5} />
            <Caret w={6} h={9} d="M5 1 1.500 4.500 5 8" />
            <HThumb />
            <Caret w={6} h={9} d="M1 1l3.500 3.500L1 8" />
          </BottomBar>
        </Viewer>
        <SidePanel>
          <SignIn><Text $size={11.5} $color="#0000e0" width={36}>Sign In</Text></SignIn>
          {panels.map(([name, w], i) => (
            <PanelRow key={name} $last={i === panels.length - 1}>
              <svg width="6" height="8" viewBox="0 0 6 8"><path d="M0 0v8l6-4z" fill="#333" /></svg>
              <Text $size={12.5} $weight={700} $color="#404040" $embossed width={w}>{name}</Text>
            </PanelRow>
          ))}
        </SidePanel>
      </Workspace>
      <Taskbar>
        <Wallpaper width="1366" height="40" viewBox="0 0 1366 40">
          <path d="M673 0h79l7 40H668z" fill="#a0803e" />
          <path d="M752 0h614v40H759z" fill="#bfa677" />
          <path d="M1172 0h194v40h-122C1210 30 1200 18 1172 0z" fill="#bd902e" />
          <path d="M1200 0h166v40h-86C1250 28 1225 18 1200 0z" fill="#c59c38" />
          <path d="M0 .5h1366" stroke="#8a6d38" opacity=".5" />
        </Wallpaper>
        <StartButton><WindowsLogo /></StartButton>
        {apps.map(({ Icon, plain, active }, i) => (
          <AppButton key={i} $plain={plain} $active={active}><Icon /></AppButton>
        ))}
        <Tray>
          <TrayIcons>
            <svg width="9" height="5" viewBox="0 0 9 5"><path d="m0 5 4.500-5L9 5z" fill="#fff" /></svg>
            <Gap $w={-0} />
            <FlagIcon /><BatteryIcon /><SignalIcon /><SpeakerIcon />
          </TrayIcons>
          <Clock>
            <Text $size={12} $color="#fff" $line={17} width={42}>4:19 PM</Text>
            <Text $size={12} $color="#fff" $line={17} width={58}>11/10/2014</Text>
          </Clock>
        </Tray>
      </Taskbar>
    </Screen>
  );
}
